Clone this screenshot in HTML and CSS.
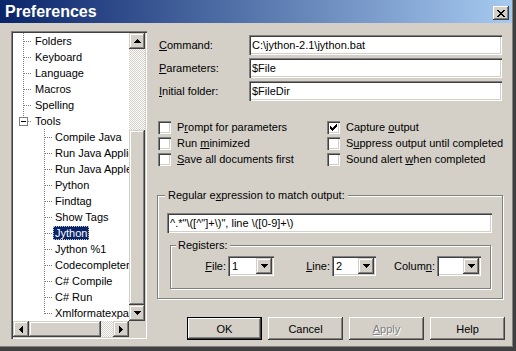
FILE: index.html
```html
<!DOCTYPE html>
<html>
<head>
<meta charset="utf-8">
<title>Preferences</title>
<link rel="stylesheet" href="styles.css">
</head>
<body>
<div class="window">
  <div class="titlebar">
    <span class="title">Preferences</span>
    <div class="close">
      <svg width="8" height="7" viewBox="0 0 8 7" shape-rendering="crispEdges"><path d="M0 0h2v1h-2zM6 0h2v1h-2zM1 1h2v1h-2zM5 1h2v1h-2zM2 2h4v1h-4zM3 3h2v1h-2zM2 4h4v1h-4zM1 5h2v1h-2zM5 5h2v1h-2zM0 6h2v1h-2zM6 6h2v1h-2z" fill="#000"/></svg>
    </div>
  </div>
  <div class="client">
    <div class="tree">
      <div class="tree-list">
        <div class="node root"><span class="label">Folders</span></div>
        <div class="node root"><span class="label">Keyboard</span></div>
        <div class="node root"><span class="label">Language</span></div>
        <div class="node root"><span class="label">Macros</span></div>
        <div class="node root"><span class="label">Spelling</span></div>
        <div class="node root last toggle"><span class="expander"><span class="minus"></span></span><span class="label">Tools</span></div>
        <div class="node child"><span class="label">Compile Java</span></div>
        <div class="node child"><span class="label">Run Java Application</span></div>
        <div class="node child"><span class="label">Run Java Applet</span></div>
        <div class="node child"><span class="label">Python</span></div>
        <div class="node child"><span class="label">Findtag</span></div>
        <div class="node child"><span class="label">Show Tags</span></div>
        <div class="node child"><span class="label selected">Jython</span></div>
        <div class="node child"><span class="label">Jython %1</span></div>
        <div class="node child"><span class="label">Codecompleter</span></div>
        <div class="node child"><span class="label">C# Compile</span></div>
        <div class="node child"><span class="label">C# Run</span></div>
        <div class="node child last"><span class="label">Xmlformatexpath</span></div>
      </div>
      <div class="vscroll">
        <div class="sbtn"><svg width="7" height="4" viewBox="0 0 7 4" shape-rendering="crispEdges"><path d="M3 0h1v1h-1zM2 1h3v1h-3zM1 2h5v1h-5zM0 3h7v1h-7z" fill="#000"/></svg></div>
        <div class="track vtrack"></div>
        <div class="thumb vthumb"></div>
        <div class="sbtn"><svg width="7" height="4" viewBox="0 0 7 4" shape-rendering="crispEdges"><path d="M0 0h7v1h-7zM1 1h5v1h-5zM2 2h3v1h-3zM3 3h1v1h-1z" fill="#000"/></svg></div>
      </div>
      <div class="hscroll">
        <div class="sbtn"><svg width="4" height="7" viewBox="0 0 4 7" shape-rendering="crispEdges"><path d="M3 0h1v7h-1zM2 1h1v5h-1zM1 2h1v3h-1zM0 3h1v1h-1z" fill="#000"/></svg></div>
        <div class="thumb hthumb"></div>
        <div class="track htrack"></div>
        <div class="sbtn"><svg width="4" height="7" viewBox="0 0 4 7" shape-rendering="crispEdges"><path d="M0 0h1v7h-1zM1 1h1v5h-1zM2 2h1v3h-1zM3 3h1v1h-1z" fill="#000"/></svg></div>
      </div>
      <div class="corner"></div>
    </div>

    <div class="panel">
      <div class="fields">
        <span class="flabel"><u>C</u>ommand:</span>
        <div class="field">C:\jython-2.1\jython.bat</div>
        <span class="flabel"><u>P</u>arameters:</span>
        <div class="field">$File</div>
        <span class="flabel"><u>I</u>nitial folder:</span>
        <div class="field">$FileDir</div>
      </div>

      <div class="checks">
        <div class="check"><span class="cbox"></span><span class="ctext">P<u>r</u>ompt for parameters</span></div>
        <div class="check"><span class="cbox"><svg width="9" height="9" viewBox="2 2 9 9" shape-rendering="crispEdges"><path d="M9 3h1v1h-1zM8 4h2v1h-2zM3 5h1v1h-1zM7 5h3v1h-3zM3 6h2v1h-2zM6 6h3v1h-3zM3 7h5v1h-5zM4 8h3v1h-3zM5 9h1v1h-1z" fill="#000"/></svg></span><span class="ctext">Capture <u>o</u>utput</span></div>
        <div class="check"><span class="cbox"></span><span class="ctext">Run <u>m</u>inimized</span></div>
        <div class="check"><span class="cbox"></span><span class="ctext">S<u>u</u>ppress output until completed</span></div>
        <div class="check"><span class="cbox"></span><span class="ctext"><u>S</u>ave all documents first</span></div>
        <div class="check"><span class="cbox"></span><span class="ctext">Sound alert <u>w</u>hen completed</span></div>
      </div>

      <div class="group">
        <span class="legend">Regular e<u>x</u>pression to match output:</span>
        <div class="field regex">^.*"\([^"]+\)", line \([0-9]+\)</div>
        <div class="group registers">
          <span class="legend reg-legend">Registers:</span>
          <div class="reg-row">
            <span class="rlabel"><u>F</u>ile:</span>
            <div class="combo"><span class="combo-text">1</span><span class="sbtn cbtn"><svg width="7" height="4" viewBox="0 0 7 4" shape-rendering="crispEdges"><path d="M0 0h7v1h-7zM1 1h5v1h-5zM2 2h3v1h-3zM3 3h1v1h-1z" fill="#000"/></svg></span></div>
            <span class="rlabel"><u>L</u>ine:</span>
            <div class="combo"><span class="combo-text">2</span><span class="sbtn cbtn"><svg width="7" height="4" viewBox="0 0 7 4" shape-rendering="crispEdges"><path d="M0 0h7v1h-7zM1 1h5v1h-5zM2 2h3v1h-3zM3 3h1v1h-1z" fill="#000"/></svg></span></div>
            <span class="rlabel">Colum<u>n</u>:</span>
            <div class="combo"><span class="combo-text"></span><span class="sbtn cbtn"><svg width="7" height="4" viewBox="0 0 7 4" shape-rendering="crispEdges"><path d="M0 0h7v1h-7zM1 1h5v1h-5zM2 2h3v1h-3zM3 3h1v1h-1z" fill="#000"/></svg></span></div>
          </div>
        </div>
      </div>

      <div class="buttons">
        <div class="btn default">OK</div>
        <div class="btn">Cancel</div>
        <div class="btn disabled"><u>A</u>pply</div>
        <div class="btn">Help</div>
      </div>
    </div>
  </div>
</div>
</body>
</html>
```

FILE: styles.css
```css
* { box-sizing: border-box; }
html, body { margin: 0; padding: 0; }
body {
  width: 516px;
  height: 351px;
  overflow: hidden;
  background: #404040;
  font-family: "Liberation Sans", Arial, sans-serif;
  font-size: 11px;
  color: #000;
}
u { text-decoration: underline; text-underline-offset: 1px; }

.window {
  width: 513px;
  height: 347px;
  background: #d4d0c8;
  border-right: 1px solid #808080;
  border-bottom: 1px solid #808080;
  display: flex;
  flex-direction: column;
}

.titlebar {
  height: 23px;
  flex: none;
  background: linear-gradient(to right, #0a246a, #a6caf0);
  display: flex;
  align-items: flex-start;
  justify-content: space-between;
  padding: 0 3px 0 5px;
}
.title {
  color: #fff;
  font-weight: bold;
  font-size: 16px;
  line-height: 24px;
}
.close {
  margin-top: 6px;
  width: 16px;
  height: 14px;
  background: #d4d0c8;
  box-shadow: inset -1px -1px #404040, inset 1px 1px #fff, inset -2px -2px #808080, inset 2px 2px #d4d0c8;
  display: flex;
  align-items: center;
  justify-content: center;
}

.client {
  flex: 1;
  display: flex;
  align-items: flex-start;
  padding: 8px 0 0 11px;
}

/* ---------- tree ---------- */
.tree {
  flex: none;
  width: 136px;
  height: 308px;
  padding: 2px;
  background: #fff;
  box-shadow: inset 1px 1px #808080, inset 2px 2px #404040, inset -1px -1px #fff, inset -2px -2px #d4d0c8;
  display: grid;
  grid-template-columns: 116px 16px;
  grid-template-rows: 288px 16px;
}
.tree-list {
  overflow: hidden;
  white-space: nowrap;
  background: #fff;
}
.node {
  height: 16px;
  display: flex;
  align-items: center;
  background-repeat: no-repeat;
}
.node.root {
  padding-left: 20px;
  background-image:
    repeating-linear-gradient(to bottom, #808080 0 1px, transparent 1px 2px),
    repeating-linear-gradient(to right, #808080 0 1px, transparent 1px 2px);
  background-position: 10px 0, 11px 8px;
  background-size: 1px 16px, 8px 1px;
}
.node.root.last { background-size: 1px 8px, 8px 1px; }
.node.toggle { padding-left: 6px; }
.node.toggle .label { margin-left: 5px; }
.expander {
  width: 9px;
  height: 9px;
  border: 1px solid #808080;
  background: #fff;
  display: flex;
  align-items: center;
  justify-content: center;
  position: relative;
  z-index: 1;
}
.minus { width: 5px; height: 1px; background: #000; }

.node.child {
  padding-left: 40px;
  background-image:
    repeating-linear-gradient(to bottom, #808080 0 1px, transparent 1px 2px),
    repeating-linear-gradient(to right, #808080 0 1px, transparent 1px 2px);
  background-position: 31px 0, 32px 8px;
  background-size: 1px 16px, 8px 1px;
}
.node.child.last { background-size: 1px 9px, 8px 1px; }

.label {
  line-height: 14px;
  height: 14px;
  padding: 0 2px;
}
.label.selected {
  background: #0a246a;
  color: #fff;
  outline: 1px dotted #c8c8c8;
  outline-offset: -1px;
}

.vscroll {
  display: flex;
  flex-direction: column;
}
.hscroll {
  display: flex;
}
.sbtn {
  flex: none;
  width: 16px;
  height: 16px;
  background: #d4d0c8;
  box-shadow: inset -1px -1px #404040, inset 1px 1px #d4d0c8, inset -2px -2px #808080, inset 2px 2px #fff;
  display: flex;
  align-items: center;
  justify-content: center;
}
.track {
  background: repeating-conic-gradient(#fff 0 25%, #d4d0c8 0 50%) 0 0 / 2px 2px;
}
.vtrack { height: 81px; }
.htrack { width: 12px; }
.thumb {
  background: #d4d0c8;
  box-shadow: inset -1px -1px #404040, inset 1px 1px #d4d0c8, inset -2px -2px #808080, inset 2px 2px #fff;
}
.vthumb { height: 175px; }
.hthumb { width: 72px; }
.corner { background: #d4d0c8; }

/* ---------- right panel ---------- */
.panel {
  width: 348px;
  margin-left: 10px;
  display: flex;
  flex-direction: column;
}
.fields {
  margin-top: 4px;
  display: grid;
  grid-template-columns: 92px 253px;
  grid-auto-rows: 20px;
  row-gap: 3px;
  align-items: center;
}
.flabel { padding-left: 2px; }
.field {
  height: 20px;
  padding: 2px 3px;
  line-height: 16px;
  background: #fff;
  white-space: nowrap;
  overflow: hidden;
  box-shadow: inset 1px 1px #808080, inset 2px 2px #404040, inset -1px -1px #fff, inset -2px -2px #d4d0c8;
}

.checks {
  margin-top: 19px;
  display: grid;
  grid-template-columns: 169px 179px;
  grid-auto-rows: 16px;
}
.check {
  display: flex;
  align-items: flex-start;
  padding-left: 1px;
}
.cbox {
  flex: none;
  width: 13px;
  height: 13px;
  margin-top: 1px;
  padding: 2px;
  background: #fff;
  box-shadow: inset 1px 1px #808080, inset 2px 2px #404040, inset -1px -1px #fff, inset -2px -2px #d4d0c8;
  display: flex;
}
.ctext {
  margin-left: 6px;
  line-height: 15px;
}

.group {
  position: relative;
  border: 1px solid #808080;
  box-shadow: inset 1px 1px #fff, 1px 1px #fff;
}
.panel > .group {
  margin-top: 27px;
  width: 346px;
  height: 104px;
  padding: 17px 0 0 9px;
}
.legend {
  position: absolute;
  top: -8px;
  left: 7px;
  padding: 0 3px;
  line-height: 14px;
  background: #d4d0c8;
}
.regex { width: 325px; }
.registers {
  margin: 12px 0 0 3px;
  width: 321px;
  height: 44px;
  padding-top: 10px;
}
.reg-legend { left: 5px; padding: 0 2px; }
.reg-row {
  display: grid;
  grid-template-columns: 57px 46px 58px 44px 61px 44px;
  align-items: center;
}
.rlabel {
  text-align: right;
  padding-right: 2px;
}
.combo {
  height: 20px;
  padding: 2px;
  background: #fff;
  display: flex;
  box-shadow: inset 1px 1px #808080, inset 2px 2px #404040, inset -1px -1px #fff, inset -2px -2px #d4d0c8;
}
.combo-text {
  flex: 1;
  padding-left: 2px;
  line-height: 16px;
}

.buttons {
  margin-top: 18px;
  display: flex;
  justify-content: flex-end;
  gap: 6px;
}
.btn {
  width: 75px;
  height: 23px;
  background: #d4d0c8;
  display: flex;
  align-items: center;
  justify-content: center;
  box-shadow: inset -1px -1px #404040, inset 1px 1px #fff, inset -2px -2px #808080, inset 2px 2px #d4d0c8;
}
.btn.default {
  border: 1px solid #000;
  box-shadow: inset -1px -1px #404040, inset 1px 1px #fff, inset -2px -2px #808080;
}
.btn.disabled {
  color: #808080;
  text-shadow: 1px 1px #fff;
}
```
